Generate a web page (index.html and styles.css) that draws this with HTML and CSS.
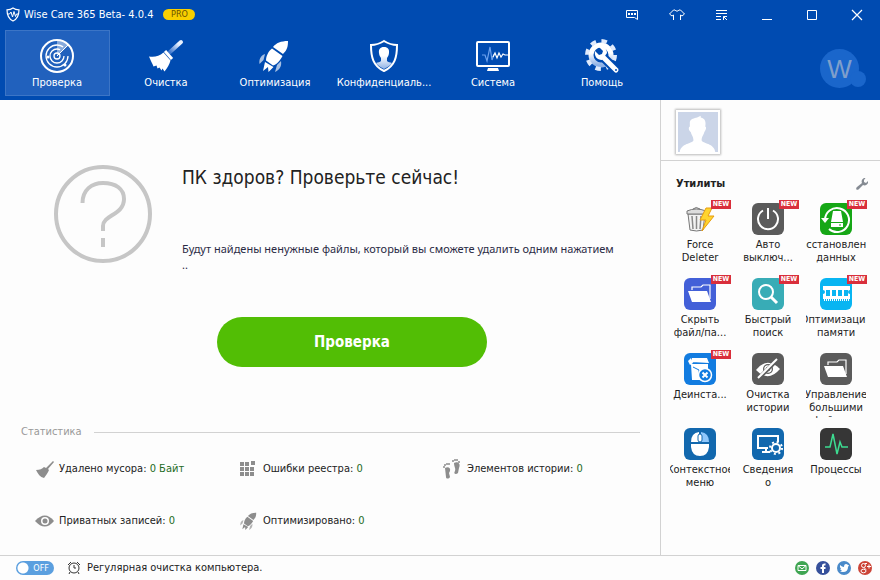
FILE: index.html
```html
<!DOCTYPE html>
<html lang="ru">

<head>
  <meta charset="UTF-8">
  <meta name="viewport" content="width=device-width, initial-scale=1.0">
  <title>Wise Care 365</title>
  <link rel="stylesheet" href="styles.css">
</head>

<body>
  <!-- shared icons -->
  <svg class="defs" width="0" height="0">
    <defs>
      <linearGradient id="fade" x1="0" y1="0" x2="0" y2="1">
        <stop offset="0.4" stop-color="#fff"/>
        <stop offset="1" stop-color="#8fb2e6"/>
      </linearGradient>
      <linearGradient id="handle" x1="1" y1="0" x2="0" y2="1">
        <stop offset="0.2" stop-color="#e8f1ff"/>
        <stop offset="1" stop-color="#3f78cf"/>
      </linearGradient>
    </defs>
    <symbol id="rocket" viewBox="0 0 36 36">
      <path d="M31 3c-7 0-12 2-15 6l10 7c4-4 5-7 5-13zM15 10.500c-4 3-6 8-6 12l7 5c4-1 7-5 9.500-9.500zM8 24l-2 9 5-4 .5 5 5-5z"/>
      <path opacity=".65" d="M8 16c-5 2-6 6-5.500 10l4-4zM24 23l-4 4-2 7c4-2 7-5 6-11z"/>
    </symbol>
    <symbol id="folder" viewBox="0 0 32 32">
      <path fill="none" stroke="#fff" stroke-width="1.200" d="M8 12V9h9l2-2h7v14"/>
      <path fill="#fff" d="M4 13h19l4 11H8z"/>
    </symbol>
  </svg>

  <header class="header">
    <div class="titlebar">
      <svg class="logo" width="14" height="15" viewBox="0 0 14 15" fill="none" stroke="#fff">
        <path stroke-width="1.200" d="M7 1c2 1.500 4 1.800 6 1.800 0 5-1 9-6 11.200C2 11.800 1 7.800 1 2.800 3 2.800 5 2.500 7 1z"/>
        <path d="M2 7h1.500L5 5l1.500 5L8 4.500l1.500 5L10.500 7H12"/>
      </svg>
      <h1 class="app-name">Wise Care 365 Beta- 4.0.4</h1>
      <span class="pro">PRO</span>
      <div class="window-buttons">
        <button class="win-btn" aria-label="Отзыв">
          <svg width="16" height="16" viewBox="0 0 16 16" fill="none" stroke="#fff"><path d="M2.500 3.500h11v9l-3-2h-8z"/><path stroke-width="2" stroke-dasharray="2 1" d="M4 7h8"/></svg>
        </button>
        <button class="win-btn" aria-label="Оформление">
          <svg width="18" height="16" viewBox="0 0 18 16" fill="none" stroke="#fff"><path d="M5.500 13V8L4 9 1.500 7l4-4H7c1 1.500 3 1.500 4 0h1.500l4 4L14 9l-1.500-1v5"/></svg>
        </button>
        <button class="win-btn" aria-label="Меню">
          <svg width="16" height="16" viewBox="0 0 16 16" fill="none" stroke="#fff"><path d="M2 3.500h11M2 6.500h11M2 9.500h5M2 12.500h5M9.500 13V9.500H13M9.500 9.500l3.500 3.500"/></svg>
        </button>
        <button class="win-btn" aria-label="Свернуть">
          <svg width="16" height="16" viewBox="0 0 16 16" stroke="#fff"><path d="M3 12.500h10"/></svg>
        </button>
        <button class="win-btn" aria-label="Развернуть">
          <svg width="16" height="16" viewBox="0 0 16 16" fill="none" stroke="#fff"><path d="M3.500 3.500h9v9h-9z"/></svg>
        </button>
        <button class="win-btn" aria-label="Закрыть">
          <svg width="16" height="16" viewBox="0 0 16 16" stroke="#fff"><path stroke-width="1.200" d="M3 3l10 10M13 3L3 13"/></svg>
        </button>
      </div>
    </div>

    <div class="toolbar">
      <nav class="nav">
        <a class="tab active" href="#">
          <svg width="36" height="36" viewBox="0 0 36 36" fill="none" stroke="#fff">
            <path fill="#fff" fill-opacity=".45" stroke="none" d="M18 18V2a16 16 0 0 1 12 5z"/>
            <circle cx="18" cy="18" r="16" stroke-width="2"/>
            <circle cx="18" cy="18" r="11" stroke-width="1.300" stroke-dasharray="58 12"/>
            <circle cx="18" cy="18" r="7" stroke-width="1.300" stroke-dasharray="36 8"/>
            <circle cx="18" cy="18" r="3" stroke-width="1.300"/>
            <path d="M18 18L29 7"/>
            <circle cx="9" cy="19" r="1.500" fill="#fff" stroke="none"/>
            <circle cx="26" cy="27" r="1.500" fill="#fff" stroke="none"/>
          </svg>
          <span>Проверка</span>
        </a>
        <a class="tab" href="#">
          <svg width="36" height="36" viewBox="0 0 36 36">
            <path stroke="url(#handle)" stroke-width="4" stroke-linecap="round" d="M22 14L33 4"/>
            <path stroke="#fff" stroke-width="3" d="M17 13l7 8"/>
            <path fill="#fff" d="M15.500 14.500l7 8c-1 4-3 7-6 11l-2-3-1 2-2-3-2 1-1-3-3 1c-1-3-3-6-4.500-10 5 1 10 0 14.500-4z"/>
          </svg>
          <span>Очистка</span>
        </a>
        <a class="tab" href="#">
          <svg width="36" height="36" fill="#fff"><use href="#rocket"/></svg>
          <span>Оптимизация</span>
        </a>
        <a class="tab" href="#">
          <svg width="36" height="36" viewBox="0 0 36 36">
            <path fill="none" stroke="#fff" stroke-width="2" d="M18 3c4 2.500 8 4 13 4 0 12-2 21-13 26C7 28 5 19 5 7c5 0 9-1.500 13-4z"/>
            <path fill="url(#fade)" d="M18 9c4 0 5.500 2.500 5 6-.3 3-1.500 4-2 5v3c1 1 3 1.500 5 2-2 3-5 4.500-8 6-3-1.500-6-3-8-6 2-.5 4-1 5-2v-3c-.5-1-1.700-2-2-5-.5-3.500 1-6 5-6z"/>
          </svg>
          <span>Конфиденциаль...</span>
        </a>
        <a class="tab" href="#">
          <svg width="36" height="36" viewBox="0 0 36 36" fill="none">
            <rect x="2" y="4" width="32" height="24" rx="1" stroke="#fff" stroke-width="2"/>
            <path fill="#fff" d="M13 30h10l1 3H12z"/>
            <path stroke="#6da2ee" stroke-width="1.200" d="M7 17h3l2 6 3-14 2 13 2-6"/>
            <path stroke="#fff" stroke-width="1.200" d="M18 19l2-4 2 5 2-5 2 4 2-3 2 1h3"/>
          </svg>
          <span>Система</span>
        </a>
        <a class="tab" href="#">
          <svg width="36" height="36" viewBox="0 0 36 36">
            <circle cx="17" cy="17" r="10" fill="none" stroke="url(#fade)" stroke-width="5"/>
            <circle cx="17" cy="17" r="14" fill="none" stroke="#dfeafc" stroke-width="4" stroke-dasharray="5.500 5.500"/>
            <path stroke="#004bb1" stroke-width="9" stroke-linecap="round" d="M19 19l12 12"/>
            <path stroke="#fff" stroke-width="5" stroke-linecap="round" d="M19 19l13 13"/>
            <path fill="#fff" d="M11 13l4 4 3-1 1-3-4-4c5-1 8 2 8 6l-5 7c-5 0-8-4-7-9z"/>
            <circle cx="32" cy="32" r="1" fill="#004bb1"/>
          </svg>
          <span>Помощь</span>
        </a>
      </nav>
      <div class="brand"><span>W</span></div>
    </div>
  </header>

  <div class="content">
    <main class="main">
      <section class="hero">
        <svg class="question" width="98" height="98" viewBox="0 0 98 98" fill="none" stroke="#c6c6c6">
          <circle cx="49" cy="49" r="47" stroke-width="4"/>
          <path stroke-width="4" d="M28.500 38c0-13 9-20 20.500-20 13 0 21 6 21 16 0 16-21 16-21 27v5M49 73v9"/>
        </svg>
        <div class="hero-text">
          <h2>ПК здоров? Проверьте сейчас!</h2>
          <p>Будут найдены ненужные файлы, который вы сможете удалить одним нажатием<br>..</p>
        </div>
      </section>
      <button class="check-btn">Проверка</button>

      <section class="stats">
        <h3>Статистика</h3>
        <ul class="stats-list">
          <li>
            <svg width="20" height="20" viewBox="0 0 20 20" fill="#8d8d8d"><path d="M18 2l1 1-6 7 1 1c-1 3-3 5-5 8-4-1-6-4-8-8 4 0 6-1 8-3l2 1z"/></svg>
            <span>Удалено мусора: <b>0 Байт</b></span>
          </li>
          <li>
            <svg width="20" height="20" viewBox="0 0 20 20" fill="#8d8d8d"><path d="M1 3h4v4H1zM6 3h4v4H6zM12 2h4v4h-4zM1 8h4v4H1zM6 8h4v4H6zM11 8h4v4h-4zM1 13h4v4H1zM6 13h4v4H6zM11 13h4v4h-4z"/></svg>
            <span>Ошибки реестра: <b>0</b></span>
          </li>
          <li>
            <svg width="20" height="20" viewBox="0 0 20 20" fill="#8d8d8d">
              <path d="M2 9c3-2 6 0 5 3l-1 2 1 4c-1 2-4 2-4 0zM11 4c4-2 7 1 5 5l-1 5c-2 2-5 1-3-2 1-3-1-4-1-8z"/>
              <circle cx="1" cy="8" r="1"/><circle cx="2" cy="6" r="1"/><circle cx="4" cy="5" r="1"/><circle cx="6" cy="5" r="1"/>
              <circle cx="10" cy="2" r="1"/><circle cx="12" cy="1" r="1"/><circle cx="14" cy="1" r="1"/><circle cx="16" cy="3" r="1"/>
            </svg>
            <span>Элементов истории: <b>0</b></span>
          </li>
          <li>
            <svg width="20" height="20" viewBox="0 0 20 20"><path fill="#8d8d8d" d="M0 10q10-11 19 0-9 11-19 0z"/><circle cx="10" cy="10" r="4" fill="#fff"/><circle cx="10" cy="10" r="2.500" fill="#8d8d8d"/></svg>
            <span>Приватных записей: <b>0</b></span>
          </li>
          <li>
            <svg width="20" height="20" fill="#8d8d8d"><use href="#rocket"/></svg>
            <span>Оптимизировано: <b>0</b></span>
          </li>
        </ul>
      </section>
    </main>

    <aside class="sidebar">
      <div class="user">
        <svg class="avatar" width="44" height="44" viewBox="0 0 44 44">
          <path fill="#cbd5e8" d="M0 0h44v44H0z"/>
          <path fill="#fff" d="M13 11c1-4 5-4 8-5l4-2v2c5 1 6 5 5 10 2 1 0 5-1 6-1 4-3 5-3 9 1 4 14 3 15 13H2c1-10 14-9 15-13 0-4-2-5-3-9-2-1-3-5-1-6z"/>
        </svg>
      </div>
      <div class="tools-head">
        <h3>Утилиты</h3>
        <button class="wrench" aria-label="Настроить">
          <svg width="12" height="12" viewBox="0 0 12 12"><path fill="#858b93" d="M8 0C6 1 5 3 6 5L1 9c-2 2 0 4 2 2l4-4c2 1 4 0 5-2V3l-2 2-2-1V2l1.500-2z"/></svg>
        </button>
      </div>
      <ul class="tools">
        <li class="tool">
          <svg class="tool-icon" viewBox="0 0 32 32">
            <path fill="#f2f2f2" stroke="#777" d="M4 11h17l-2 16q-6.500 2-13 0z"/>
            <path stroke="#888" stroke-width="1.500" d="M8 13l1 13M12.500 13v13M17 13l-1 13"/>
            <path fill="#ddd" stroke="#777" d="M3 8q9-4 19 0v3H3zM9 6q3-3 7 0"/>
            <path fill="#ffd52e" stroke="#e69c10" d="M22 5l-6 12h6l-4 11 12-15h-6l4-8z"/>
          </svg>
          <em class="new">NEW</em>
          <p>Force<br>Deleter</p>
        </li>
        <li class="tool">
          <svg class="tool-icon gray" viewBox="0 0 32 32" fill="none" stroke="#fff" stroke-width="2"><path d="M11 7.500a10 10 0 1 0 10 0M16 5v11"/></svg>
          <em class="new">NEW</em>
          <p>Авто<br>выключ...</p>
        </li>
        <li class="tool">
          <svg class="tool-icon green" viewBox="0 0 32 32" fill="none" stroke="#fff">
            <path stroke-width="2" d="M5 17A12 12 0 1 1 9 26"/>
            <path fill="#fff" stroke="none" d="M1 15h8l-4 5z"/>
            <path fill="#fff" stroke="none" d="M13 8h8l2 11H11zM11 20h12v4H11z"/>
            <path stroke="#16a716" d="M19 22h2"/>
          </svg>
          <em class="new">NEW</em>
          <p>Восстановление<br>данных</p>
        </li>
        <li class="tool">
          <svg class="tool-icon indigo"><use href="#folder"/></svg>
          <em class="new">NEW</em>
          <p>Скрыть<br>файл/па...</p>
        </li>
        <li class="tool">
          <svg class="tool-icon teal" viewBox="0 0 32 32" fill="none" stroke="#fff" stroke-width="2"><circle cx="14" cy="14" r="7"/><path stroke-width="3" d="M19 19l6 6"/></svg>
          <em class="new">NEW</em>
          <p>Быстрый<br>поиск</p>
        </li>
        <li class="tool">
          <svg class="tool-icon cyan" viewBox="0 0 32 32">
            <path fill="#fff" d="M3 8h27v4a2 2 0 0 0 0 4v5H3v-5a2 2 0 0 0 0-4z"/>
            <path fill="#08b5f2" d="M6 12h4v6H6zM12 12h4v6h-4zM18 12h4v6h-4zM24 12h4v6h-4z"/>
            <path stroke="#fff" stroke-width="2" stroke-dasharray="1 1" d="M4 22h25"/>
          </svg>
          <em class="new">NEW</em>
          <p>Оптимизация<br>памяти</p>
        </li>
        <li class="tool">
          <svg class="tool-icon blue" viewBox="0 0 32 32">
            <path fill="#fff" d="M7 11h17v16H8zM8 5h15l2 5-17-1zM4 8l3-3 2 5-3 2z"/>
            <path fill="none" stroke="#127ce0" d="M9 14l6 3v7"/>
            <circle cx="21" cy="22" r="6.500" fill="#127ce0" stroke="#fff" stroke-width="1.500"/>
            <path stroke="#fff" stroke-width="2" d="M18.500 19.500l5 5M23.500 19.500l-5 5"/>
          </svg>
          <em class="new">NEW</em>
          <p>Деинста...</p>
        </li>
        <li class="tool">
          <svg class="tool-icon gray" viewBox="0 0 32 32" fill="none">
            <path fill="#fff" d="M4 17q11-14 24-1-12 14-24 1z"/>
            <circle cx="16" cy="16" r="5" fill="#5b5b5b"/><circle cx="16" cy="16" r="3" stroke="#fff" stroke-width="1.500"/>
            <path stroke="#5b5b5b" stroke-width="4" d="M7 25L25 7"/><path stroke="#fff" stroke-width="2" d="M6 25L25 6"/>
          </svg>
          <p>Очистка<br>истории</p>
        </li>
        <li class="tool">
          <svg class="tool-icon gray"><use href="#folder"/></svg>
          <p>Управление<br>большими<br>файлами</p>
        </li>
        <li class="tool">
          <svg class="tool-icon navy" viewBox="0 0 32 32">
            <path fill="#fff" d="M15 4v10H7q0-9 8-10zM7 16h18v3q-1 9-9 9t-9-9z"/>
            <path fill="#8fc7fb" d="M17 4v10h8q0-9-8-10z"/>
            <rect x="14" y="6" width="4" height="8" rx="2" fill="#fff" stroke="#1268ae"/>
          </svg>
          <p>Контекстное<br>меню</p>
        </li>
        <li class="tool">
          <svg class="tool-icon navy" viewBox="0 0 32 32" fill="none" stroke="#fff" stroke-width="2">
            <path d="M16 20H6V8h20v6M10 24h8M14 20v4"/>
            <circle cx="24" cy="20" r="4"/>
            <circle cx="24" cy="20" r="6" stroke-dasharray="2 2.700"/>
          </svg>
          <p>Сведения<br>о</p>
        </li>
        <li class="tool">
          <svg class="tool-icon dark" viewBox="0 0 32 32" fill="none" stroke="#3ddc91" stroke-width="1.500"><path d="M5 19h5l3-13 4 20 3-12 2 5h6"/></svg>
          <p>Процессы</p>
        </li>
      </ul>
    </aside>
  </div>

  <footer class="footer">
    <label class="switch">
      <input type="checkbox">
      <span>OFF</span>
    </label>
    <svg class="clock" width="14" height="14" viewBox="0 0 14 14" fill="none" stroke="#333"><circle cx="7" cy="7" r="5"/><path d="M7 4v3h2M1 4l3-3M13 4l-3-3M3 11l-1 2M11 11l1 2"/></svg>
    <span class="schedule">Регулярная очистка компьютера.</span>
    <div class="social">
      <a href="#" class="mail" aria-label="E-mail"><svg width="14" height="14" viewBox="0 0 14 14" fill="none" stroke="#fff"><path d="M3 4.500h8v5H3zM3 4.500L7 8l4-3.500"/></svg></a>
      <a href="#" class="fb" aria-label="Facebook"><svg width="14" height="14" viewBox="0 0 14 14" fill="none" stroke="#fff" stroke-width="2"><path d="M9.500 3.500q-3-.5-2.500 2V12M4.500 7h5"/></svg></a>
      <a href="#" class="tw" aria-label="Twitter"><svg width="14" height="14" viewBox="0 0 14 14"><path fill="#fff" d="M3 4q2 2 4 2 0-3 2-3 1 0 2 1h1l-1 2q0 5-5 5-2 0-3-1h2L3 8h1L3 6z"/></svg></a>
      <a href="#" class="gp" aria-label="Google+"><svg width="14" height="14" viewBox="0 0 14 14" fill="none" stroke="#fff"><circle cx="5.500" cy="4.500" r="2"/><path d="M7 2.500h2M6 6.500l2 2"/><ellipse cx="5.500" cy="10" rx="2.500" ry="1.800"/><path d="M9 5.500h4M11 3.500v4"/></svg></a>
    </div>
  </footer>
</body>

</html>
```
FILE: styles.css
```css
* {
  margin: 0;
  padding: 0;
  box-sizing: border-box;
}

body {
  display: flex;
  flex-direction: column;
  min-height: 100vh;
  background-color: #fdfdfd;
  color: #222;
  font: 11px/14px Tahoma, "DejaVu Sans Condensed", "Noto Sans", sans-serif;
}

ul {
  list-style: none;
}

a {
  color: inherit;
  text-decoration: none;
}

button {
  border: none;
  background: none;
  font-family: inherit;
  cursor: pointer;
}

svg {
  display: block;
  flex-shrink: 0;
}

.defs {
  position: absolute;
}

/* header */
.header {
  background-color: #004bb1;
  color: #fff;
}

.titlebar {
  display: flex;
  align-items: center;
  height: 30px;
  padding: 0 1px 1px 6px;
}

.app-name {
  margin-left: 4px;
  font-size: 11px;
  font-weight: normal;
}

.pro {
  width: 32px;
  margin-left: 10px;
  border-radius: 6px;
  background-color: #f8cf00;
  color: #6b5300;
  font-size: 9px;
  line-height: 11px;
  text-align: center;
}

.window-buttons {
  display: flex;
  margin-left: auto;
}

.win-btn {
  display: flex;
  align-items: center;
  justify-content: center;
  width: 45px;
  height: 29px;
}

.win-btn:hover {
  background-color: #2463bf;
}

.toolbar {
  display: flex;
  justify-content: space-between;
  padding: 0 14px 4px 5px;
}

.nav {
  display: flex;
  gap: 4px;
}

.tab {
  display: flex;
  flex-direction: column;
  align-items: center;
  gap: 2px;
  width: 105px;
  height: 66px;
  padding: 7px 1px 0 0;
  border: 1px solid transparent;
  white-space: nowrap;
}

.tab.active {
  border-color: #3c75c6;
  background-color: #2161bd;
}

.brand {
  position: relative;
  width: 46px;
  height: 40px;
  margin-top: 19px;
}

.brand span {
  display: block;
  width: 39px;
  height: 39px;
  border-radius: 50%;
  background-color: #1a66cb;
  color: #7f9fcb;
  font: 26px/40px "Liberation Sans", sans-serif;
  text-align: center;
}

.brand::after {
  content: "";
  position: absolute;
  right: 0;
  bottom: 2px;
  width: 16px;
  height: 16px;
  border-radius: 50%;
  background-color: #1a66cb;
}

/* content */
.content {
  display: flex;
  flex: 1;
}

.main {
  display: flex;
  flex-direction: column;
  flex: 1;
  padding: 65px 20px 0 21px;
}

.hero {
  display: flex;
  gap: 30px;
  padding-left: 33px;
}

.hero h2 {
  font-size: 19px;
  font-weight: normal;
  line-height: 24px;
}

.hero p {
  margin-top: 52px;
  color: #2b2b45;
  font-family: Tahoma, "Noto Sans", sans-serif;
  line-height: 16px;
}

.check-btn {
  width: 270px;
  height: 50px;
  margin: 44px 0 0 196px;
  border-radius: 25px;
  background-color: #52be05;
  color: #fff;
  font-size: 15px;
  font-weight: bold;
}

.check-btn:hover {
  background-color: #5cca0d;
}

.stats {
  margin-top: 58px;
}

.stats h3 {
  display: flex;
  align-items: center;
  gap: 12px;
  color: #999;
  font-size: 11px;
  font-weight: normal;
}

.stats h3::after {
  content: "";
  flex: 1;
  height: 1px;
  background-color: #d2d2d2;
}

.stats-list {
  display: grid;
  grid-template-columns: 1fr 1fr 197px;
  row-gap: 32px;
  margin-top: 20px;
  padding-left: 14px;
}

.stats-list li {
  display: flex;
  align-items: center;
  gap: 4px;
  white-space: nowrap;
}

.stats-list b {
  color: #246b24;
  font-weight: normal;
}

/* sidebar */
.sidebar {
  width: 220px;
  border-left: 1px solid #d2d2d2;
}

.user {
  padding: 10px 15px 6px;
  border-bottom: 1px solid #d2d2d2;
}

.avatar {
  border: 2px solid #fff;
  box-shadow: 0 0 2px 1px #bbb;
}

.tools-head {
  display: flex;
  align-items: center;
  justify-content: space-between;
  padding: 16px 12px 0 15px;
}

.tools-head h3 {
  font-size: 11px;
}

.tools {
  display: grid;
  grid-template-columns: repeat(3, 60px);
  grid-auto-rows: 67px;
  gap: 8px;
  padding: 12px 0 0 9px;
}

.tool {
  position: relative;
  display: flex;
  flex-direction: column;
  align-items: center;
  cursor: pointer;
}

.tool-icon {
  width: 32px;
  height: 32px;
  border-radius: 6px;
}

.tool p {
  display: flex;
  justify-content: center;
  width: 60px;
  max-height: 30px;
  margin-top: 3px;
  overflow: hidden;
  line-height: 13px;
  text-align: center;
  white-space: nowrap;
}

.new {
  position: absolute;
  top: -3px;
  right: -1px;
  width: 20px;
  background-color: #d92f3c;
  color: #fff;
  font-size: 7px;
  font-style: normal;
  font-weight: bold;
  line-height: 9px;
  text-align: center;
}

.gray { background-color: #5b5b5b; }
.green { background-color: #16a716; }
.indigo { background-color: #4360d8; }
.teal { background-color: #38acb6; }
.cyan { background-color: #08b5f2; }
.blue { background-color: #127ce0; }
.navy { background-color: #1268ae; }
.dark { background-color: #363636; }

/* footer */
.footer {
  display: flex;
  align-items: center;
  height: 25px;
  padding: 0 8px 0 16px;
  border-top: 1px solid #d2d2d2;
}

.switch {
  position: relative;
  display: flex;
}

.switch input {
  appearance: none;
  width: 38px;
  height: 14px;
  border-radius: 7px;
  background: radial-gradient(circle at 7px 7px, #fff 5px, #5b9fdf 6px);
  cursor: pointer;
}

.switch span {
  position: absolute;
  right: 5px;
  color: #fff;
  font-size: 9px;
}

.clock {
  margin: 0 6px 0 13px;
}

.social {
  display: flex;
  gap: 7px;
  margin-left: auto;
}

.social a {
  border-radius: 50%;
}

.mail { background-color: #3fa552; }
.fb { background-color: #36509b; }
.tw { background-color: #4a8ac9; }
.gp { background-color: #cc4437; }
```
